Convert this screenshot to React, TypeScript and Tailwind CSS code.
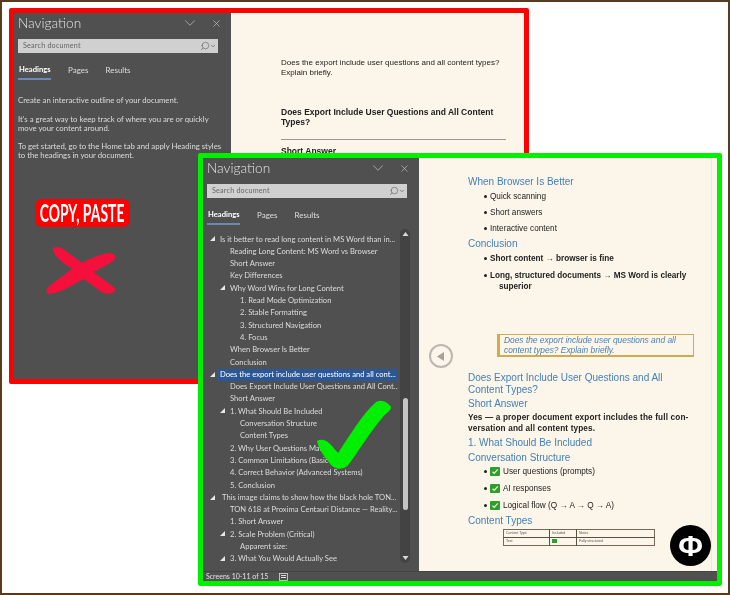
import { Search, ChevronDown, X } from "lucide-react";

const uiFont = "font-['Lato','Noto_Sans',sans-serif]";

const indents = ["pl-[13px]", "pl-[23px]", "pl-[33px]"];

const rows: { text: string; level: number; open?: boolean; active?: boolean; nudge?: boolean }[] = [
  { text: "5. Problem Area", level: 2 },
  { text: "Is it better to read long content in MS Word than in...", level: 0, open: true },
  { text: "Reading Long Content: MS Word vs Browser", level: 1 },
  { text: "Short Answer", level: 1 },
  { text: "Key Differences", level: 1 },
  { text: "Why Word Wins for Long Content", level: 1, open: true },
  { text: "1. Read Mode Optimization", level: 2 },
  { text: "2. Stable Formatting", level: 2 },
  { text: "3. Structured Navigation", level: 2 },
  { text: "4. Focus", level: 2 },
  { text: "When Browser Is Better", level: 1 },
  { text: "Conclusion", level: 1 },
  { text: "Does the export include user questions and all cont...", level: 0, open: true, active: true },
  { text: "Does Export Include User Questions and All Cont...", level: 1 },
  { text: "Short Answer", level: 1 },
  { text: "1. What Should Be Included", level: 1, open: true },
  { text: "Conversation Structure", level: 2 },
  { text: "Content Types", level: 2 },
  { text: "2. Why User Questions Matter", level: 1 },
  { text: "3. Common Limitations (Basic Tools)", level: 1 },
  { text: "4. Correct Behavior (Advanced Systems)", level: 1 },
  { text: "5. Conclusion", level: 1 },
  { text: "This image claims to show how the black hole TON...", level: 0, open: true, nudge: true },
  { text: "TON 618 at Proxima Centauri Distance — Reality...", level: 1 },
  { text: "1. Short Answer", level: 1 },
  { text: "2. Scale Problem (Critical)", level: 1, open: true },
  { text: "Apparent size:", level: 2 },
  { text: "3. What You Would Actually See", level: 1, open: true },
];

function NavHeader() {
  return (
    <div className="h-[71px] shrink-0 pl-1 pr-[9px] text-[#dedede]">
      <div className="flex h-[20px] items-center justify-between">
        <span className="text-[13.7px] font-light text-[#e4e4e4]">Navigation</span>
        <div className="flex items-center gap-[12px]">
          <ChevronDown className="h-[18px] w-[18px]" strokeWidth={0.8} />
          <X className="h-[11px] w-[11px]" strokeWidth={1.2} />
        </div>
      </div>
      <div className="mt-[6px] flex h-[14px] w-[200px] items-center justify-between bg-[#d0d0d0] pl-[5px] pr-[2px]">
        <span className="text-[7.2px] tracking-[0.2px] text-[#666]">Search document</span>
        <div className="flex items-center text-[#666]">
          <Search className="h-[10px] w-[10px] -scale-x-100" strokeWidth={1.6} />
          <ChevronDown className="h-[6px] w-[6px]" strokeWidth={3} />
        </div>
      </div>
      <div className="mt-[11px] flex items-start gap-[17px] text-[8px]">
        <div className="h-[16px] w-[33px] border-b-2 border-[#6d89b3] pl-px text-[7.6px] font-bold text-white">Headings</div>
        <div>Pages</div>
        <div>Results</div>
      </div>
    </div>
  );
}

function TreeRow({ row }: { row: (typeof rows)[number] }) {
  return (
    <div className={`flex h-[12.3px] items-center whitespace-nowrap ${indents[row.level]}`}>
      <span
        className={`relative -ml-[2px] flex h-[12px] flex-1 items-center pl-[2px] ${row.active ? "bg-[#2b5797] text-white" : ""} ${row.nudge ? "pl-[4px]" : ""}`}
      >
        {row.open && (
          <svg viewBox="0 0 5 5" className="absolute -left-[8px] top-[3px] h-[5px] w-[5px]">
            <polygon points="5,0 5,5 0,5" fill="#e8e8e8" />
          </svg>
        )}
        {row.text}
      </span>
    </div>
  );
}

function Scrollbar() {
  return (
    <div className="flex h-[334px] w-[10px] shrink-0 flex-col items-center rounded-[5px] bg-[#434343] py-[3px]">
      <svg viewBox="0 0 6 4" className="h-[4px] w-[7px]"><polygon points="3,0 6,4 0,4" fill="#d8d8d8" /></svg>
      <div className="mt-[162px] h-[112px] w-[5px] rounded-[3px] bg-[#c4c4c4]" />
      <svg viewBox="0 0 6 4" className="mt-auto h-[4px] w-[7px]"><polygon points="0,0 6,0 3,4" fill="#d8d8d8" /></svg>
    </div>
  );
}

function CheckIcon() {
  return (
    <svg viewBox="0 0 10 9" className="h-[9px] w-[10px] shrink-0">
      <rect width="10" height="9" rx="1" fill="#2f9e2f" />
      <path d="M2.5 4.7 L4.2 6.3 L7.8 2.4" stroke="#e8f5d8" strokeWidth="1.2" fill="none" />
    </svg>
  );
}

function Heading({ children, className = "" }: { children: React.ReactNode; className?: string }) {
  return <div className={`text-[10px] leading-[12px] text-[#4480b8] ${className}`}>{children}</div>;
}

function Bullet({ children, className = "" }: { children: React.ReactNode; className?: string }) {
  return (
    <div className={`relative ml-[22px] text-[8.2px] leading-[11px] text-[#222] ${className}`}>
      <span className="absolute -left-[6px] top-[4px] h-[3px] w-[3px] rounded-full bg-[#222]" />
      {children}
    </div>
  );
}

function RedWindow() {
  return (
    <div className="absolute left-[9px] top-[8px] flex h-[376px] w-[520px] rounded-[2px] border-[5px] border-[#ff0000]">
      <div className={`flex w-[217px] shrink-0 flex-col bg-[#505050] ${uiFont}`}>
        <NavHeader />
        <div className="whitespace-nowrap pl-1 text-[7.75px] leading-[9px] text-[#dcdcdc]">
          <p className="mt-[12px]">Create an interactive outline of your document.</p>
          <p className="mt-[9.5px]">It's a great way to keep track of where you are or quickly<br />move your content around.</p>
          <p className="mt-[9.5px]">To get started, go to the Home tab and apply Heading styles<br />to the headings in your document.</p>
        </div>
        <div className="ml-[21px] mt-[39px] flex h-[28px] w-[95px] items-center justify-center rounded-[7px] bg-[#ff0000]">
          <span className="scale-x-[0.58] whitespace-nowrap text-[24px] font-bold text-white">COPY, PASTE</span>
        </div>
      </div>
      <div className="flex-1 overflow-hidden whitespace-nowrap bg-[#fcf5e9] pl-[50px] pr-[18px] pt-[45px] font-['Liberation_Sans',sans-serif] text-[#222]">
        <p className="text-[8px] leading-[9.8px]">Does the export include user questions and all content types?<br />Explain briefly.</p>
        <p className="mt-[29px] text-[8.5px] font-bold leading-[10.4px]">Does Export Include User Questions and All Content<br />Types?</p>
        <div className="mt-[12px] h-px bg-[#999]" />
        <p className="mt-[6px] text-[8.5px] font-bold leading-[10px]">Short Answer</p>
      </div>
    </div>
  );
}

function GreenWindow() {
  return (
    <div className="absolute left-[198px] top-[153px] flex h-[433px] w-[524px] flex-col rounded-[2px] border-[5px] border-[#00f000]">
      <div className="flex min-h-0 flex-1">
        <div className={`flex w-[216px] shrink-0 flex-col bg-[#505050] ${uiFont}`}>
          <NavHeader />
          <div className="flex items-start pl-1 pr-[9px]">
            <div className="h-[334px] w-[191px] overflow-hidden text-[7.6px] text-[#dcdcdc]">
              <div className="-mt-[8.15px]">
                {rows.map((row, i) => <TreeRow key={i} row={row} />)}
              </div>
            </div>
            <div className="ml-[2px]"><Scrollbar /></div>
          </div>
        </div>
        <div className="relative min-w-0 flex-1 whitespace-nowrap bg-[#fcf5e9] font-['Liberation_Sans',sans-serif]">
          <div className="mr-[5px] h-full border-r border-[#efe8dc] pl-[49px] pr-[20px] pt-[18px]">
            <Heading>When Browser Is Better</Heading>
            <Bullet className="mt-[2.5px]">Quick scanning</Bullet>
            <Bullet className="mt-[5px]">Short answers</Bullet>
            <Bullet className="mt-[5px]">Interactive content</Bullet>
            <Heading className="mt-[4px]">Conclusion</Heading>
            <Bullet className="mt-[3px] font-bold">Short content → browser is fine</Bullet>
            <Bullet className="mt-[6px] font-bold">Long, structured documents → MS Word is clearly<br /><span className="pl-[9px]">superior</span></Bullet>
            <div className="ml-[29px] mt-[42.5px] h-[23px] w-[197px] border border-b-2 border-l-[3px] border-[#d0ad4c] pl-[4px] pt-[1px] text-[8.4px] italic leading-[9.5px] text-[#4a80b5]">
              Does the export include user questions and all<br />content types? Explain briefly.
            </div>
            <Heading className="mt-[15px]">Does Export Include User Questions and All<br />Content Types?</Heading>
            <Heading className="mt-[2px]">Short Answer</Heading>
            <p className="mt-[3px] text-[8.2px] font-bold leading-[10.7px] tracking-[0.15px] text-[#222]">Yes — a proper document export includes the full con-<br />versation and all content types.</p>
            <Heading className="mt-[3px]">1. What Should Be Included</Heading>
            <Heading className="mt-[2.7px]">Conversation Structure</Heading>
            <Bullet className="mt-[1.5px]"><span className="flex items-center gap-[3px]"><CheckIcon />User questions (prompts)</span></Bullet>
            <Bullet className="mt-[6.5px]"><span className="flex items-center gap-[3px]"><CheckIcon />AI responses</span></Bullet>
            <Bullet className="mt-[5.5px]"><span className="flex items-center gap-[3px]"><CheckIcon />Logical flow (Q → A → Q → A)</span></Bullet>
            <Heading className="mt-[4px]">Content Types</Heading>
            <table className="ml-[35px] mt-[2px] w-[152px] table-fixed border border-[#75695a] text-[3.5px] leading-[7px] text-[#555]">
              <tbody>
                <tr className="border-b border-[#5a5040]">
                  <td className="w-[46px] border-r border-[#5a5040] pl-[2px]">Content Type</td>
                  <td className="w-[27px] border-r border-[#5a5040] pl-[2px]">Included</td>
                  <td className="pl-[2px]">Notes</td>
                </tr>
                <tr>
                  <td className="border-r border-[#5a5040] pl-[2px]">Text</td>
                  <td className="border-r border-[#5a5040] pl-[2px]"><div className="h-[4px] w-[5px] bg-[#2f9e2f]" /></td>
                  <td className="pl-[2px]">Fully structured</td>
                </tr>
              </tbody>
            </table>
          </div>
          <div className="absolute left-[10px] top-[186px] flex h-[24px] w-[24px] items-center justify-center rounded-full border-2 border-[#bbb7b0]">
            <svg viewBox="0 0 7 9" className="mr-[2px] h-[9px] w-[7px]"><polygon points="7,0 7,9 0,4.5" fill="#a5a29c" /></svg>
          </div>
        </div>
      </div>
      <div className={`flex h-[10px] shrink-0 items-center gap-[11px] border-t border-[#444] bg-[#505050] pl-[3px] text-[7px] leading-none text-[#e0e0e0] ${uiFont}`}>
        <span>Screens 10-11 of 15</span>
        <svg viewBox="0 0 9 8" className="h-[8px] w-[9px]">
          <rect x="0.5" y="0.5" width="8" height="7" fill="none" stroke="#ddd" strokeWidth="0.8" />
          <rect x="2" y="2" width="5" height="1" fill="#ddd" />
          <rect x="2" y="4" width="5" height="1" fill="#ddd" />
        </svg>
      </div>
    </div>
  );
}

export default function App() {
  return (
    <div className="relative h-[595px] w-[730px] overflow-hidden bg-white blur-[0.35px]">
      <RedWindow />
      <GreenWindow />
      {/* hand drawn marks over the screenshots */}
      <svg viewBox="0 0 730 595" className="pointer-events-none absolute inset-0 h-full w-full">
        <path d="M53 248 C58 245 64 249 70 254 L116 289 C112 296 104 294 100 291 L84 279 C72 285 60 293 50 294 C44 293 46 288 52 284 L72 269 C62 262 53 256 53 248 Z M110 253 C116 254 117 258 112 262 L86 276 L76 266 C86 261 100 253 110 253 Z" fill="#f5103c" />
        <path d="M317 441 C322 438 328 441 332 446 L338 453 C350 435 362 415 375 403 C380 398 388 402 391 407 C391 411 386 413 383 417 C370 432 358 452 349 464 C345 470 336 470 331 465 C326 458 319 451 317 441 Z" fill="#00f000" />
      </svg>
      <div className="absolute bottom-[29px] left-[670px] flex h-[41px] w-[41px] items-center justify-center rounded-full bg-black font-['Liberation_Sans',sans-serif] text-[30px] font-bold leading-none text-white">
        Φ
      </div>
      <div className="pointer-events-none absolute inset-0 border-2 border-[#5a3a1e]" />
    </div>
  );
}
